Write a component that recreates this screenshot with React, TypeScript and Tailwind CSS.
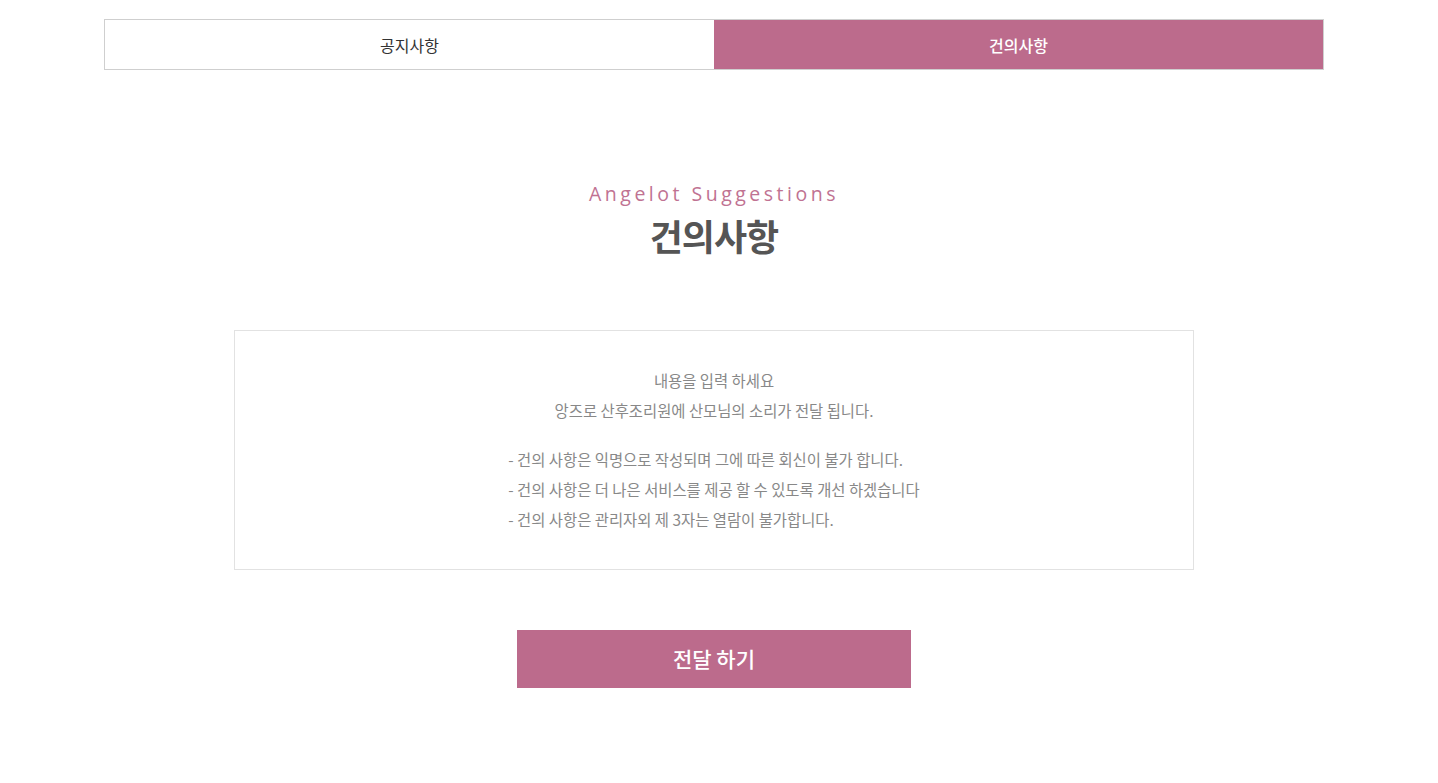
export default function App() {
    const font = { fontFamily: '"Noto Sans CJK KR", "Noto Sans", sans-serif' };
    const notes = [
        '- 건의 사항은 익명으로 작성되며 그에 따른 회신이 불가 합니다.',
        '- 건의 사항은 더 나은 서비스를 제공 할 수 있도록 개선 하겠습니다',
        '- 건의 사항은 관리자외 제 3자는 열람이 불가합니다.',
    ];

    return (
        <div className="min-h-[783px] bg-white pt-[19px] pr-[10px]" style={font}>
            <div className="mx-auto flex w-[1220px] border border-[#cfcfcf]">
                <button className="flex h-[49px] flex-1 items-center justify-center bg-white text-[16px] text-[#333]">
                    공지사항
                </button>
                <button className="flex h-[49px] flex-1 items-center justify-center bg-[#bc6b8c] text-[16px] font-medium text-white">
                    건의사항
                </button>
            </div>

            <div className="mt-[111px] flex flex-col items-center">
                <div
                    className="text-[19.5px] leading-[26px] tracking-[3.5px] text-[#c07292]"
                    style={{ fontFamily: '"Open Sans", "Noto Sans", sans-serif' }}
                >
                    Angelot Suggestions
                </div>
                <h2 className="mt-[6px] text-[36px] font-semibold leading-[44px] tracking-[-1px] text-[#555]">건의사항</h2>
            </div>

            <div className="mx-auto mt-[73px] flex h-[240px] w-[960px] flex-col items-center border border-[#e2e2e2] pt-[34px] text-[15.4px] text-[#888]">
                <p className="leading-[30px]">내용을 입력 하세요</p>
                <p className="leading-[30px]">앙즈로 산후조리원에 산모님의 소리가 전달 됩니다.</p>
                <ul className="mt-[19px] text-left">
                    {notes.map((n) => (
                        <li key={n} className="leading-[30px]">{n}</li>
                    ))}
                </ul>
            </div>

            <div className="mt-[60px] flex justify-center">
                <button className="h-[58px] w-[394px] bg-[#bc6b8c] text-[21px] font-medium text-white">전달 하기</button>
            </div>
        </div>
    );
}
